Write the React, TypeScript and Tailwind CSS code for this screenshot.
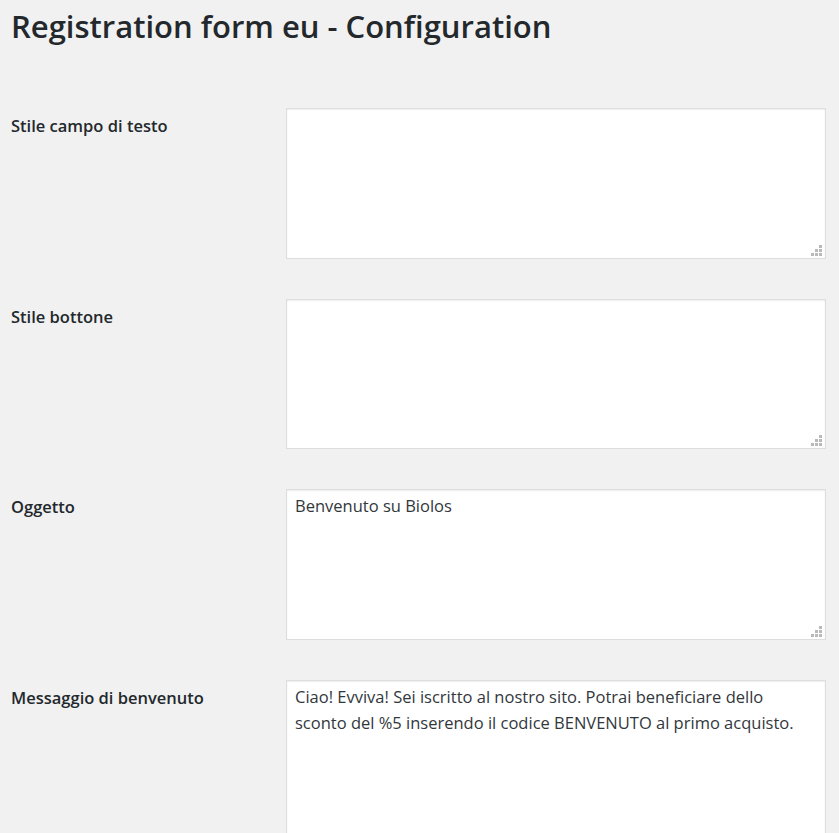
import React from "react";

const FONT = "font-['Open_Sans','Noto_Sans',sans-serif]";

const ResizeGrip = () => (
  <svg
    className="pointer-events-none absolute right-[4px] bottom-[3px]"
    width="11"
    height="11"
    viewBox="0 0 11 11"
    aria-hidden="true"
  >
    <g fill="#b9b9b9">
      <rect x="8" y="0" width="3" height="3" />
      <rect x="4" y="4" width="3" height="3" />
      <rect x="8" y="4" width="3" height="3" />
      <rect x="0" y="8" width="3" height="3" />
      <rect x="4" y="8" width="3" height="3" />
      <rect x="8" y="8" width="3" height="3" />
    </g>
  </svg>
);

interface FieldRowProps {
  label: string;
  value?: string;
  tall?: boolean;
}

const FieldRow = ({ label, value = "", tall = false }: FieldRowProps) => (
  <div className="flex items-start pb-[40px]">
    <label className="w-[275px] shrink-0 pt-[5px] text-[16.5px] font-semibold leading-[26px] text-[#23282d]">
      {label}
    </label>
    <div
      className={`relative w-[540px] shrink-0 ${tall ? "h-[240px]" : "h-[150.6px]"}`}
    >
      <textarea
        defaultValue={value}
        className={`h-full w-full resize-none border border-[#dddddd] bg-white px-[8px] py-[3px] text-[16.5px] leading-[26px] text-[#32373c] shadow-[inset_0_1px_2px_rgba(0,0,0,0.07)] outline-none ${FONT}`}
      />
      <ResizeGrip />
    </div>
  </div>
);

export default function App() {
  return (
    <div className={`h-[833px] overflow-hidden bg-[#f1f1f1] pl-[11px] ${FONT}`}>
      <h1 className="pt-[3px] text-[31px] font-semibold leading-[46px] text-[#23282d]">
        Registration form eu - Configuration
      </h1>

      <div className="mt-[59px]">
        <FieldRow label="Stile campo di testo" />
        <FieldRow label="Stile bottone" />
        <FieldRow label="Oggetto" value="Benvenuto su Biolos" />
        <FieldRow
          label="Messaggio di benvenuto"
          value="Ciao! Evviva! Sei iscritto al nostro sito. Potrai beneficiare dello sconto del %5 inserendo il codice BENVENUTO al primo acquisto."
          tall
        />
      </div>
    </div>
  );
}
